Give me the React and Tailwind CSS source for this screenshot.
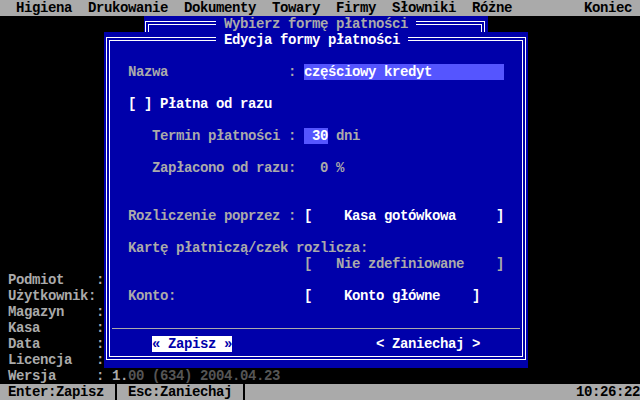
import React from 'react';

const Gray = ({ children }) => <span className="text-[#aaaaaa]">{children}</span>;
const White = ({ children }) => <span className="text-white">{children}</span>;
const Field = ({ children }) => <span className="bg-[#5555ff] text-white">{children}</span>;

const Line = ({ children, className = '' }) => (
  <div className={`h-4 pl-[18px] ${className}`}>{children}</div>
);

const MenuBar = () => (
  <div className="h-4 bg-[#aaaaaa] text-black flex justify-between pr-2">
    <span>{'  Higiena  Drukowanie  Dokumenty  Towary  Firmy  Słowniki  Różne'}</span>
    <span>Koniec</span>
  </div>
);

const OuterWindow = () => (
  <div className="relative h-4 ml-[144px] w-[344px] bg-[#0000aa] pl-[1px] pt-[5px] pr-[3px]">
    <div className="h-full border-t border-x border-white pt-[2px] px-[2px]">
      <div className="h-full border-t border-x border-white" />
    </div>
    <span className="absolute top-0 left-[72px] bg-[#0000aa] text-[#aaaaaa]">{' Wybierz formę płatności '}</span>
  </div>
);

const Info = () => (
  <div className="w-[104px] flex flex-col justify-end pl-2 text-[#aaaaaa]">
    <div className="h-4">{'Podmiot    :'}</div>
    <div className="h-4">{'Użytkownik:'}</div>
    <div className="h-4">{'Magazyn    :'}</div>
    <div className="h-4">{'Kasa       :'}</div>
    <div className="h-4">{'Data       :'}</div>
    <div className="h-4">{'Licencja   :'}</div>
  </div>
);

const EditWindow = () => (
  <div className="relative w-[424px] h-[336px] bg-[#0000aa] pl-[2px] pt-[5px] pr-[2px] pb-[8px]">
    <div className="h-full border border-white p-[2px]">
      <div className="h-full border border-white pt-[23px]">
        <Line>
          <Gray>{'Nazwa               : '}</Gray>
          <Field>{'częściowy kredyt         '}</Field>
        </Line>
        <Line />
        <Line><White>{'[ ] Płatna od razu'}</White></Line>
        <Line />
        <Line>
          <Gray>{'   Termin płatności : '}</Gray>
          <Field>{' 30'}</Field>
          <Gray>{' dni'}</Gray>
        </Line>
        <Line />
        <Line><Gray>{'   Zapłacono od razu:   0 %'}</Gray></Line>
        <Line />
        <Line />
        <Line>
          <Gray>{'Rozliczenie poprzez : '}</Gray>
          <White>{'[    Kasa gotówkowa     ]'}</White>
        </Line>
        <Line />
        <Line><Gray>{'Kartę płatniczą/czek rozlicza:'}</Gray></Line>
        <Line><Gray>{'                      [   Nie zdefiniowane    ]'}</Gray></Line>
        <Line />
        <Line>
          <Gray>{'Konto:                '}</Gray>
          <White>{'[    Konto główne    ]'}</White>
        </Line>
        <Line />
        <div className="h-4 flex items-center px-[2px]">
          <div className="h-px w-full bg-[#aaaaaa]" />
        </div>
        <Line>
          {'   '}
          <span className="bg-white text-[#0000aa]">{'« Zapisz »'}</span>
          {'                  '}
          <White>{'< Zaniechaj >'}</White>
        </Line>
      </div>
    </div>
    <span className="absolute top-0 left-[112px] bg-[#0000aa] text-white">{' Edycja formy płatności '}</span>
  </div>
);

const Sep = () => (
  <span className="w-2 h-4 flex justify-center">
    <span className="w-[2px] h-full bg-black" />
  </span>
);

const StatusBar = () => (
  <div className="h-4 bg-[#aaaaaa] text-black flex">
    <span>{' Enter:Zapisz '}</span>
    <Sep />
    <span>{' Esc:Zaniechaj '}</span>
    <Sep />
    <span className="flex-1" />
    <span>10:26:22</span>
  </div>
);

export default function App() {
  return (
    <div className="w-[640px] h-[400px] bg-black font-['Liberation_Mono','DejaVu_Sans_Mono',monospace] text-[14px] tracking-[-0.4px] leading-4 font-bold whitespace-pre flex flex-col overflow-hidden">
      <MenuBar />
      <OuterWindow />
      <div className="flex h-[336px]">
        <Info />
        <EditWindow />
      </div>
      <div className="h-4 pl-2 text-[#aaaaaa]">
        {'Wersja     : 1.'}
        <span className="text-[#555555]">00 (634) 2004.04.23</span>
      </div>
      <StatusBar />
    </div>
  );
}
